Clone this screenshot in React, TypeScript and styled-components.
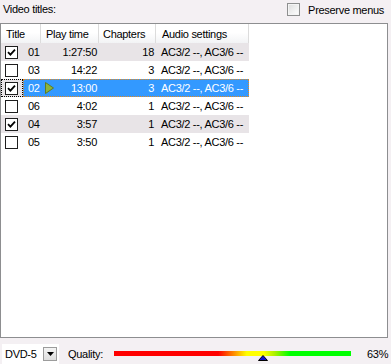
import React from 'react';
import styled, { createGlobalStyle } from 'styled-components';

const Global = createGlobalStyle`
  html, body { margin: 0; padding: 0; background: #f4f0f3; }
  body {
    font-family: "Liberation Sans", Arial, sans-serif;
    font-size: 11px;
    letter-spacing: -0.3px;
    color: #000;
  }
  #root { width: 391px; height: 364px; }
`;

const Window = styled.div`
  width: 391px;
  height: 364px;
  display: flex;
  flex-direction: column;
  background: #f4f0f3;
  overflow: hidden;
  box-sizing: border-box;
`;

const TopBar = styled.div`
  height: 18px;
  display: flex;
  align-items: center;
  justify-content: space-between;
  padding: 1px 7px 0 3px;
  box-sizing: border-box;
`;

const Label = styled.span`
  white-space: nowrap;
  line-height: 13px;
`;

const PreserveLabel = styled.label`
  display: flex;
  align-items: center;
  gap: 8px;
  white-space: nowrap;
`;

const FlatBox = styled.span`
  width: 13px;
  height: 13px;
  box-sizing: border-box;
  border: 1px solid #8e8f8f;
  background: linear-gradient(135deg, #dcdcdc 0%, #f2f2f2 60%, #ffffff 100%);
  box-shadow: inset 0 0 0 1px #f4f4f4;
`;

const ListBox = styled.div`
  margin-top: 5px;
  width: 388px;
  height: 315px;
  box-sizing: border-box;
  border: 1px solid #8d8e90;
  background: #fff;
  display: flex;
  flex-direction: column;
  overflow: hidden;
`;

const Header = styled.div`
  display: flex;
  height: 19px;
  flex: none;
`;

const HeaderCell = styled.div<{ $w: number; $pad: number }>`
  width: ${p => p.$w}px;
  box-sizing: border-box;
  padding-left: ${p => p.$pad}px;
  border-right: 1px solid #dcdcdc;
  background: linear-gradient(#ffffff 0%, #ffffff 45%, #f2f3f5 100%);
  display: flex;
  align-items: center;
  white-space: nowrap;
`;

const Row = styled.div<{ $checked: boolean }>`
  display: flex;
  width: 248px;
  height: 18px;
  flex: none;
  background: ${p => (p.$checked ? '#e8e4e7' : '#fff')};
`;

const CheckCell = styled.div<{ $focus: boolean }>`
  width: 22px;
  box-sizing: border-box;
  display: flex;
  align-items: center;
  padding-left: 4px;
  outline: ${p => (p.$focus ? '1px dotted #000' : 'none')};
  outline-offset: -1px;
`;

const RowBody = styled.div<{ $selected: boolean }>`
  flex: 1;
  display: flex;
  align-items: center;
  box-sizing: border-box;
  color: ${p => (p.$selected ? '#fff' : '#000')};
  background: ${p => (p.$selected ? '#3399ff' : 'transparent')};
  outline: ${p => (p.$selected ? '1px dotted #e58a1f' : 'none')};
  outline-offset: -1px;
`;

const TitleText = styled.div`
  width: 18px;
  padding-left: 5px;
  box-sizing: border-box;
`;

const PlayCell = styled.div`
  width: 58px;
  box-sizing: border-box;
  padding: 0 2px 0 4px;
  display: flex;
  align-items: center;
  justify-content: space-between;
`;

const NumCell = styled.div`
  width: 57px;
  box-sizing: border-box;
  padding-right: 2px;
  text-align: right;
`;

const AudioCell = styled.div`
  width: 93px;
  box-sizing: border-box;
  padding-left: 5px;
  white-space: nowrap;
  overflow: hidden;
`;

const Box = styled.span`
  width: 13px;
  height: 13px;
  box-sizing: border-box;
  border: 1px solid #1e1e1e;
  background: #fff;
  display: flex;
  align-items: center;
  justify-content: center;
`;

const BottomBar = styled.div`
  flex: 1;
  display: flex;
  align-items: center;
  padding: 5px 0 0 2px;
  box-sizing: border-box;
`;

const Combo = styled.div`
  width: 57px;
  height: 20px;
  background: #fff;
  display: flex;
  align-items: center;
  justify-content: space-between;
  padding: 0 2px 0 3px;
  box-sizing: border-box;
`;

const DropButton = styled.span`
  width: 14px;
  height: 14px;
  box-sizing: border-box;
  border: 1px solid #9c9c9c;
  background: linear-gradient(#f4f4f4, #dedede);
  display: flex;
  align-items: center;
  justify-content: center;
`;

const QualityLabel = styled.span`
  margin-left: 9px;
  width: 46px;
`;

const Meter = styled.div`
  position: relative;
  width: 237px;
  height: 9px;
  margin-top: 3px;
`;

const MeterBar = styled.div`
  height: 5px;
  background: linear-gradient(
    to right,
    #ff0000 0%,
    #ff0000 44%,
    #ff8000 50%,
    #ffff00 56%,
    #ffff00 63%,
    #a8f000 68%,
    #00ff00 74%,
    #00ff00 100%
  );
`;

const Marker = styled.svg`
  position: absolute;
  top: 4px;
  transform: translateX(-5px);
`;

const Percent = styled.span`
  margin-left: 16px;
`;

type Item = { id: string; time: string; ch: number; checked: boolean; selected?: boolean };

const items: Item[] = [
  { id: '01', time: '1:27:50', ch: 18, checked: true },
  { id: '03', time: '14:22', ch: 3, checked: false },
  { id: '02', time: '13:00', ch: 3, checked: true, selected: true },
  { id: '06', time: '4:02', ch: 1, checked: false },
  { id: '04', time: '3:57', ch: 1, checked: true },
  { id: '05', time: '3:50', ch: 1, checked: false },
];

const Check = ({ on }: { on: boolean }) => (
  <Box>
    {on && (
      <svg width="9" height="9" viewBox="0 0 9 9">
        <path d="M1 4.2 L3.4 6.6 L8 1.6" stroke="#000" strokeWidth="1.8" fill="none" />
      </svg>
    )}
  </Box>
);

const quality = 63;

export default function App() {
  return (
    <>
      <Global />
      <Window>
        <TopBar>
          <Label>Video titles:</Label>
          <PreserveLabel>
            <FlatBox />
            <span>Preserve menus</span>
          </PreserveLabel>
        </TopBar>
        <ListBox>
          <Header>
            <HeaderCell $w={40} $pad={5}>Title</HeaderCell>
            <HeaderCell $w={58} $pad={5}>Play time</HeaderCell>
            <HeaderCell $w={57} $pad={4}>Chapters</HeaderCell>
            <HeaderCell $w={93} $pad={6}>Audio settings</HeaderCell>
          </Header>
          {items.map(it => (
            <Row key={it.id} $checked={it.checked}>
              <CheckCell $focus={!!it.selected}>
                <Check on={it.checked} />
              </CheckCell>
              <RowBody $selected={!!it.selected}>
                <TitleText>{it.id}</TitleText>
                <PlayCell>
                  {it.selected ? (
                    <svg width="9" height="12" viewBox="0 0 9 12">
                      <path d="M0.5 0.5 L8.5 6 L0.5 11.5 Z" fill="#8cb43c" stroke="#5e7d22" strokeWidth="1" />
                    </svg>
                  ) : (
                    <span />
                  )}
                  <span>{it.time}</span>
                </PlayCell>
                <NumCell>{it.ch}</NumCell>
                <AudioCell>AC3/2 --, AC3/6 --</AudioCell>
              </RowBody>
            </Row>
          ))}
        </ListBox>
        <BottomBar>
          <Combo>
            <span>DVD-5</span>
            <DropButton>
              <svg width="7" height="4" viewBox="0 0 7 4">
                <path d="M0 0 H7 L3.5 4 Z" fill="#000" />
              </svg>
            </DropButton>
          </Combo>
          <QualityLabel>Quality:</QualityLabel>
          <Meter>
            <MeterBar />
            <Marker width="10" height="6" viewBox="0 0 10 6" style={{ left: `${quality}%` }}>
              <path d="M5 0.5 L9.5 5.5 H0.5 Z" fill="#1010d0" stroke="#000" strokeWidth="1" />
            </Marker>
          </Meter>
          <Percent>{quality}%</Percent>
        </BottomBar>
      </Window>
    </>
  );
}
